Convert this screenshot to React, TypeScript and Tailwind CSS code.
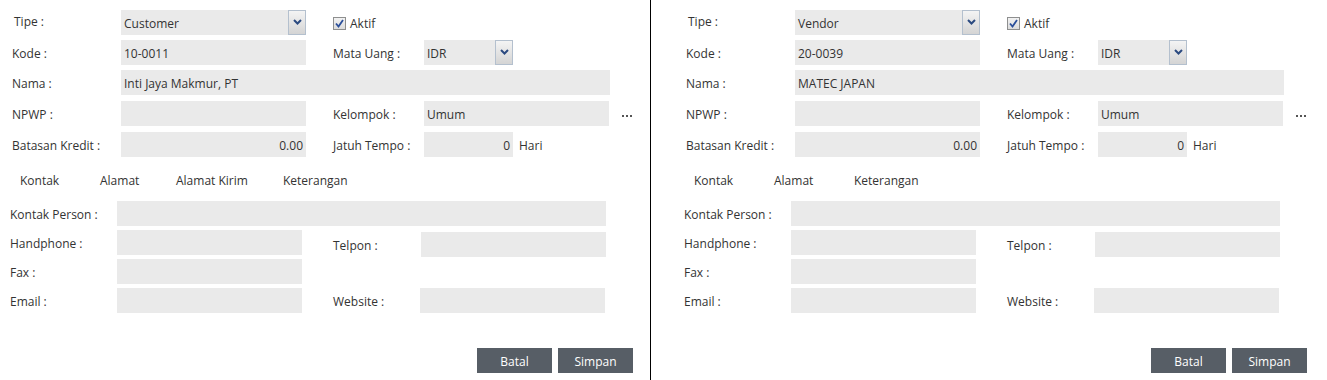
import React from "react";

type Tab = { label: string; w: string };

type PanelProps = {
  tipe: string;
  kode: string;
  nama: string;
  tabs: Tab[];
  offset?: boolean;
};

const Field = ({ w, value, right }: { w: string; value?: string; right?: boolean }) => (
  <div
    className={`${w} h-[25px] bg-[#eaeaea] flex items-center px-[3px] pt-[2px] text-[#333] ${
      right ? "justify-end" : ""
    }`}
  >
    {value}
  </div>
);

const Select = ({ w, value }: { w: string; value: string }) => (
  <div className={`${w} h-[25px] bg-[#eaeaea] flex items-stretch text-[#333]`}>
    <div className="flex-1 flex items-center px-[3px] pt-[2px]">{value}</div>
    <div className="w-[18px] flex justify-center pt-[8px] border border-[#b4c0ce] bg-gradient-to-b from-[#f4f4f4] to-[#d4d4d4]">
      <svg width="9" height="6" viewBox="0 0 9 6">
        <path d="M1 1 L4.5 4.5 L8 1" fill="none" stroke="#2b4a80" strokeWidth="2" />
      </svg>
    </div>
  </div>
);

const Check = () => (
  <div className="w-[13px] h-[13px] border border-[#8e8f8f] bg-gradient-to-b from-[#f2f2f2] to-[#dcdcdc] flex items-center justify-center">
    <svg width="9" height="9" viewBox="0 0 9 9">
      <path d="M1 4.5 L3.5 7.5 L8 1" fill="none" stroke="#2b4f9a" strokeWidth="1.8" />
    </svg>
  </div>
);

const Btn = ({ label }: { label: string }) => (
  <div className="w-[75px] h-[25px] bg-[#575e66] text-white flex items-center justify-center pt-[1px]">{label}</div>
);

const Dots = () => (
  <div className="ml-[13px] flex items-center gap-[2px] pt-[5px]">
    <span className="w-[2px] h-[2px] bg-[#555]" />
    <span className="w-[2px] h-[2px] bg-[#555]" />
    <span className="w-[2px] h-[2px] bg-[#555]" />
  </div>
);

const Panel = ({ tipe, kode, nama, tabs, offset }: PanelProps) => (
  <div className={`${offset ? "w-[676px] pl-[23px]" : "w-[651px] border-r border-black"} h-[380px] pt-[10px] shrink-0`}>
    {/* header fields */}
    <div className="flex h-[25px]">
      <div className="w-[121px] pl-[14px] pt-[3px] text-[#333]">Tipe :</div>
      <Select w="w-[185px]" value={tipe} />
      <div className="ml-[27px] flex items-center gap-[4px] pt-[1px]">
        <Check />
        <span className="text-[#333]">Aktif</span>
      </div>
    </div>
    <div className="flex h-[25px] mt-[5px]">
      <div className="w-[121px] pl-[12px] pt-[2px] flex items-center text-[#333]">Kode :</div>
      <Field w="w-[185px]" value={kode} />
      <div className="ml-[27px] w-[91px] pt-[2px] flex items-center text-[#333]">Mata Uang :</div>
      <Select w="w-[89px]" value="IDR" />
    </div>
    <div className="flex h-[25px] mt-[5px]">
      <div className="w-[121px] pl-[12px] pt-[2px] flex items-center text-[#333]">Nama :</div>
      <Field w="w-[489px]" value={nama} />
    </div>
    <div className="flex h-[25px] mt-[6px]">
      <div className="w-[121px] pl-[12px] pt-[2px] flex items-center text-[#333]">NPWP :</div>
      <Field w="w-[185px]" />
      <div className="ml-[27px] w-[91px] pt-[2px] flex items-center text-[#333]">Kelompok :</div>
      <Field w="w-[185px]" value="Umum" />
      <Dots />
    </div>
    <div className="flex h-[25px] mt-[6px]">
      <div className="w-[121px] pl-[12px] pt-[2px] flex items-center text-[#333]">Batasan Kredit :</div>
      <Field w="w-[185px]" value="0.00" right />
      <div className="ml-[27px] w-[91px] pt-[2px] flex items-center text-[#333]">Jatuh Tempo :</div>
      <Field w="w-[89px]" value="0" right />
      <div className="ml-[6px] pt-[2px] flex items-center text-[#333]">Hari</div>
    </div>

    {/* tabs */}
    <div className="flex h-[18px] mt-[15px] pl-[20px] text-[#333]">
      {tabs.map((t) => (
        <div key={t.label} className={t.w}>
          {t.label}
        </div>
      ))}
    </div>

    {/* kontak */}
    <div className="flex h-[25px] mt-[11px]">
      <div className="w-[117px] pl-[10px] pt-[2px] flex items-center text-[#333]">Kontak Person :</div>
      <Field w="w-[489px]" />
    </div>
    <div className="flex h-[27px] mt-[4px]">
      <div className="w-[117px] pl-[10px] pt-[2px] h-[25px] flex items-center text-[#333]">Handphone :</div>
      <div className="h-[25px]">
        <Field w="w-[185px]" />
      </div>
      <div className="flex mt-[2px]">
        <div className="ml-[31px] w-[88px] pt-[2px] flex items-center text-[#333]">Telpon :</div>
        <Field w="w-[185px]" />
      </div>
    </div>
    <div className="flex h-[25px] mt-[2px]">
      <div className="w-[117px] pl-[10px] pt-[2px] flex items-center text-[#333]">Fax :</div>
      <Field w="w-[185px]" />
    </div>
    <div className="flex h-[25px] mt-[4px]">
      <div className="w-[117px] pl-[10px] pt-[2px] flex items-center text-[#333]">Email :</div>
      <Field w="w-[185px]" />
      <div className="ml-[31px] w-[87px] pt-[2px] flex items-center text-[#333]">Website :</div>
      <Field w="w-[185px]" />
    </div>

    {/* buttons */}
    <div className="flex gap-[6px] mt-[35px] pl-[477px]">
      <Btn label="Batal" />
      <Btn label="Simpan" />
    </div>
  </div>
);

export default function App() {
  return (
    <div className="w-[1327px] h-[380px] bg-white flex overflow-hidden font-['Open_Sans',sans-serif] text-[12px] leading-[17px]">
      <Panel
        tipe="Customer"
        kode="10-0011"
        nama="Inti Jaya Makmur, PT"
        tabs={[
          { label: "Kontak", w: "w-[80px]" },
          { label: "Alamat", w: "w-[76px]" },
          { label: "Alamat Kirim", w: "w-[107px]" },
          { label: "Keterangan", w: "w-[100px]" },
        ]}
      />
      <Panel
        offset
        tipe="Vendor"
        kode="20-0039"
        nama="MATEC JAPAN"
        tabs={[
          { label: "Kontak", w: "w-[80px]" },
          { label: "Alamat", w: "w-[80px]" },
          { label: "Keterangan", w: "w-[100px]" },
        ]}
      />
    </div>
  );
}
